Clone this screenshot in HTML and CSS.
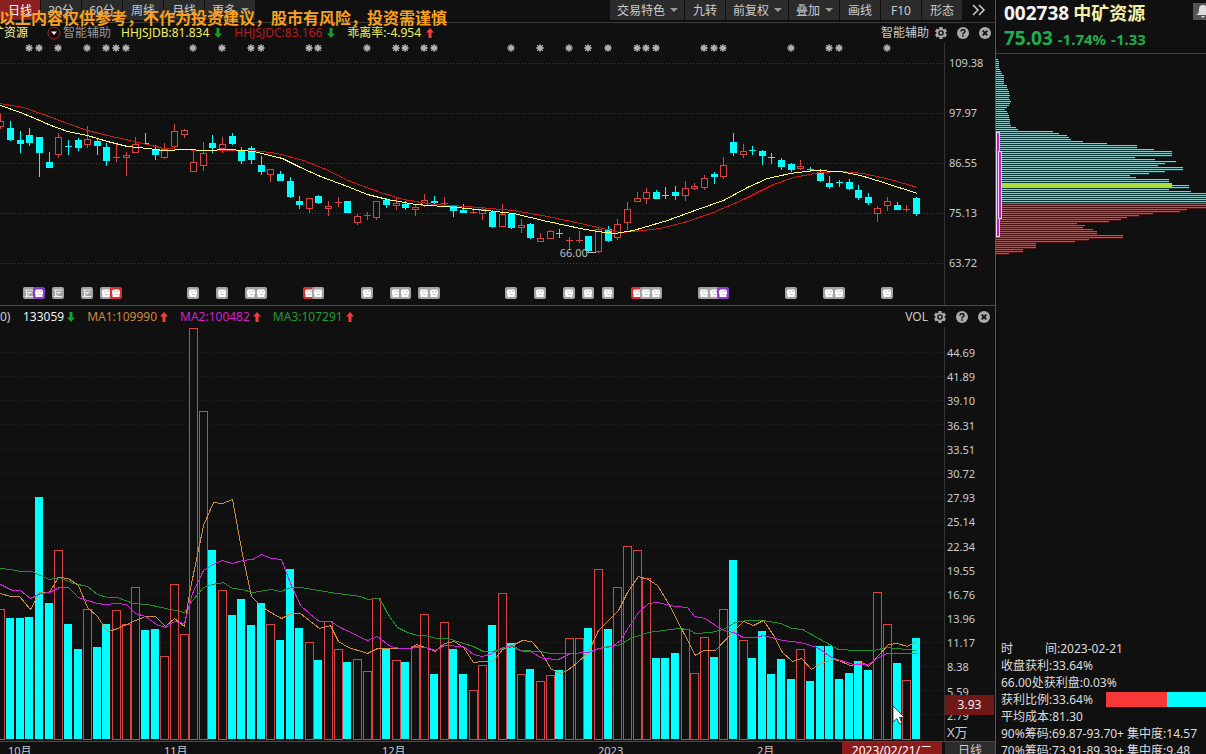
FILE: index.html
```html
<!DOCTYPE html>
<html lang="zh-CN">
<head>
<meta charset="utf-8">
<title>002738 中矿资源</title>
<link rel="stylesheet" href="styles.css">
</head>
<body>
<svg class="defs" width="0" height="0" aria-hidden="true">
  <symbol id="gear" viewBox="0 0 12 12"><path d="M6 0V12M.8 3L11.200 9M11.200 3L.8 9" stroke="#a9a9a9" stroke-width="3.200"/><circle cx="6" cy="6" r="4.500" fill="#a9a9a9"/><circle cx="6" cy="6" r="2.800" fill="#111"/><circle cx="6" cy="6" r="1.400" fill="#a9a9a9"/></symbol>
  <symbol id="help" viewBox="0 0 12 12"><circle cx="6" cy="6" r="6" fill="#a9a9a9"/><path d="M4 4.600Q4 2.800 6 2.800T8 4.500Q8 5.400 6 6.600V7.400" fill="none" stroke="#111" stroke-width="1.500"/><path d="M5.200 8.300h1.600v1.500H5.200z" fill="#111"/></symbol>
  <symbol id="close" viewBox="0 0 12 12"><circle cx="6" cy="6" r="6" fill="#a9a9a9"/><path d="M3.700 3.700l4.600 4.600M8.300 3.700L3.700 8.300" stroke="#111" stroke-width="1.900"/></symbol>
  <symbol id="up" viewBox="0 0 8 10"><path d="M4 0l4 4.500H5.500V10h-3V4.500H0z" fill="#f83c3c"/></symbol>
  <symbol id="down" viewBox="0 0 8 10"><path d="M4 10L0 5.500h2.500V0h3v5.500H8z" fill="#14a02c"/></symbol>
</svg>
<main class="charts">
  <nav class="toolbar">
    <div class="tabs">
      <button class="tab active">日线</button><button class="tab">30分</button><button class="tab">60分</button><button class="tab">周线</button><button class="tab">月线</button><button class="tab drop">更多</button>
    </div>
    <div class="tabs">
      <button class="tab drop">交易特色</button><button class="tab">九转</button><button class="tab drop">前复权</button><button class="tab drop">叠加</button><button class="tab">画线</button><button class="tab">F10</button><button class="tab">形态</button>
      <button class="more" aria-label="更多工具"><svg width="14" height="12" viewBox="0 0 14 12"><path d="M1 1l5 5-5 5M7 1l5 5-5 5" fill="none" stroke="#ccc" stroke-width="1.500"/></svg></button>
    </div>
  </nav>
  <p class="notice">以上内容仅供参考，不作为投资建议，股市有风险，投资需谨慎</p>

  <section class="panel">
    <header class="head">
      <div class="legend">
        <span class="stock">中矿资源</span>
        <svg class="pick" width="14" height="14" viewBox="0 0 14 14"><circle cx="7" cy="7" r="6" fill="#160808" stroke="#a02828"/><path d="M4 5.500h6L7 9z" fill="#eee"/></svg>
        <span class="assist">智能辅助</span>
        <span class="yellow">HHJSJDB:81.834</span><svg class="arrow"><use href="#down"/></svg>
        <span class="red">HHJSJDC:83.166</span><svg class="arrow"><use href="#down"/></svg>
        <span class="yellow">乖离率:-4.954</span><svg class="arrow"><use href="#up"/></svg>
      </div>
      <div class="tools"><span>智能辅助</span>
        <button aria-label="设置"><svg><use href="#gear"/></svg></button><button aria-label="帮助"><svg><use href="#help"/></svg></button><button aria-label="关闭"><svg><use href="#close"/></svg></button>
      </div>
    </header>
    <div class="body">
      <div class="plot">
        <svg id="price" viewBox="0 43 944 262" preserveAspectRatio="none"></svg>
        <span class="low">66.00</span>
      </div>
      <div class="axis price-axis"><span>109.38</span><span>97.97</span><span>86.55</span><span>75.13</span><span>63.72</span></div>
    </div>
  </section>

  <section class="panel volume">
    <header class="head">
      <div class="legend">
        <span class="params">0)</span>
        <span class="vol">133059</span><svg class="arrow"><use href="#down"/></svg>
        <span class="orange">MA1:109990</span><svg class="arrow"><use href="#up"/></svg>
        <span class="magenta">MA2:100482</span><svg class="arrow"><use href="#up"/></svg>
        <span class="green">MA3:107291</span><svg class="arrow"><use href="#up"/></svg>
      </div>
      <div class="tools"><span>VOL</span>
        <button aria-label="设置"><svg><use href="#gear"/></svg></button><button aria-label="帮助"><svg><use href="#help"/></svg></button><button aria-label="关闭"><svg><use href="#close"/></svg></button>
      </div>
    </header>
    <div class="body">
      <div class="plot"><svg id="volume" viewBox="0 327 944 414" preserveAspectRatio="none"></svg></div>
      <div class="axis volume-axis">
        <div class="scale"><span>44.69</span><span>41.89</span><span>39.10</span><span>36.31</span><span>33.51</span><span>30.72</span><span>27.93</span><span>25.14</span><span>22.34</span><span>19.55</span><span>16.76</span><span>13.96</span><span>11.17</span><span>8.38</span><span>5.59</span><span>2.79</span></div>
        <span class="unit">X万</span>
        <span class="marker">3.93</span>
      </div>
    </div>
  </section>

  <footer class="timeline">
    <div class="dates"><span>10月</span><span>11月</span><span>12月</span><span>2023</span><span>2月</span><span class="today">2023/02/21/二</span></div>
    <span class="period">日线</span>
  </footer>
</main>

<aside class="side">
  <header class="quote">
    <button class="bell" aria-label="提醒"><svg width="20" height="17" viewBox="0 0 20 17"><path d="M10 2c-3 0-4 2-4 5 0 3-1 4-3 5h14c-2-1-3-2-3-5 0-3-1-5-4-5zM8 13h4l-2 2z" fill="#ddd"/></svg></button>
    <h1><span class="code">002738</span> <span class="name">中矿资源</span></h1>
    <p class="last"><strong>75.03</strong> <span>-1.74%</span> <span>-1.33</span></p>
  </header>
  <svg id="chips" width="211" height="204" viewBox="995 54 211 204"></svg>
  <div class="info">
    <p><span class="wide">时</span>间:2023-02-21</p>
    <p>收盘获利:33.64%</p>
    <p>66.00处获利盘:0.03%</p>
    <p class="ratio"><span>获利比例:33.64%</span><span class="bar"><i></i></span></p>
    <p>平均成本:81.30</p>
    <p>90%筹码:69.87-93.70+ 集中度:14.57</p>
    <p>70%筹码:73.91-89.39+ 集中度:9.48</p>
  </div>
</aside>
<script src="charts.js"></script>
</body>
</html>
```

FILE: styles.css
```css
* { box-sizing: border-box; }
body {
  margin: 0;
  height: 100vh;
  display: flex;
  overflow: hidden;
  background: #101010;
  color: #ccc;
  font: 12px/16px "Noto Sans", "Noto Sans CJK SC", sans-serif;
}
p, h1 { margin: 0; }
button {
  margin: 0;
  padding: 0;
  border: 0;
  background: none;
  color: inherit;
  font: inherit;
}
svg { display: block; }
.defs { position: absolute; }

.charts {
  position: relative;
  flex: 1;
  min-width: 0;
  display: grid;
  grid-template-rows: 23px minmax(0, 283fr) minmax(0, 436fr) 12px;
}
.toolbar {
  display: flex;
  justify-content: space-between;
  border-bottom: 1px solid #3a3a3a;
  white-space: nowrap;
}
.tabs { display: flex; height: 20px; gap: 1px; }
.tab { background: #2b2b2b; line-height: 19px; }
.tab:not(.drop) { width: 40px; }
.tab.active { background: #8c2020; color: #fff; }
.drop { display: flex; align-items: center; gap: 5px; padding: 0 6px 0 7px; }
.drop::after { content: ""; border: 4px solid transparent; border-top-color: #999; border-bottom: 0; }
.more { width: 32px; padding-left: 9px; }
.notice {
  position: absolute;
  left: -1px;
  top: 6px;
  z-index: 1;
  color: #f9a11b;
  font-size: 16px;
  line-height: 24px;
  font-weight: bold;
  white-space: nowrap;
}

.panel { display: flex; flex-direction: column; border-bottom: 1px solid #4a4a4a; min-height: 0; }
.head { flex: none; height: 20px; display: flex; justify-content: space-between; align-items: center; overflow: hidden; }
.volume .head { height: 21px; }
.legend { display: flex; align-items: center; white-space: nowrap; }
.stock { margin-left: -20px; color: #f4f4b0; }
.pick { margin: 0 2px 0 19px; }
.assist { margin-right: 10px; color: #999; }
.arrow { width: 8px; height: 10px; margin: 0 12px 0 5px; }
.volume .arrow { margin-left: 3px; }
.yellow { color: #f0f060; }
.red { color: #b81c1c; }
.orange { color: #d0883a; }
.magenta { color: #d020d0; }
.green { color: #229a36; }
.params { width: 23px; }
.vol { color: #eee; }
.tools { display: flex; align-items: center; gap: 10px; padding-right: 4px; }
.volume .tools { padding-right: 5px; }
.tools span { margin-right: -4px; }
.tools svg { width: 12px; height: 12px; }
.body { flex: 1; display: flex; min-height: 0; }
.plot { position: relative; flex: 1; min-width: 0; }
.plot svg { width: 100%; height: 100%; }
.low { position: absolute; left: 59.300%; top: 77.500%; font-size: 11px; line-height: 14px; color: #bbb; }
.axis { position: relative; width: 51px; border-left: 1px solid #333; display: flex; flex-direction: column; font-size: 11px; }
.price-axis { justify-content: space-between; padding: 12px 0 34px 4px; }
.volume-axis { padding: 19px 0 0 2px; }
.scale { flex: 1; min-height: 0; display: flex; flex-direction: column; justify-content: space-between; line-height: 14px; }
.unit { font-size: 13px; line-height: 18px; }
.marker {
  position: absolute;
  left: 0;
  right: 1px;
  bottom: 26px;
  height: 20px;
  background: #701818;
  color: #eee;
  font-size: 12px;
  line-height: 20px;
  text-align: center;
}

.timeline { display: flex; overflow: hidden; line-height: 18px; font-size: 11px; }
.dates {
  flex: 1;
  height: 18px;
  display: grid;
  grid-template-columns: 156fr 218fr 216fr 159fr 85fr 100px;
  padding: 0 3px 0 8px;
}
.today { background: #8c1c1c; color: #fff; font-size: 12px; text-align: center; white-space: nowrap; }
.period { width: 50px; height: 18px; background: #2c2c2c; font-size: 12px; text-align: center; }

.side { width: 211px; display: flex; flex-direction: column; border-left: 1px solid #555; }
.quote { position: relative; height: 54px; padding: 2px 0 0 8px; border-bottom: 1px solid #444; white-space: nowrap; }
.bell { position: absolute; right: -7px; top: 3px; width: 20px; height: 17px; background: #555; }
h1 { font-size: 19px; line-height: 22px; color: #f4f4f4; }
.quote h1 { display: flex; gap: 4px; }
.name { font-size: 18px; color: #f6efa6; }
.last { display: flex; align-items: baseline; gap: 5px; color: #22ac4c; font-size: 15px; line-height: 28px; font-weight: bold; }
.last strong { font-size: 19px; font-weight: bold; }
#chips { flex: none; margin-left: -1px; }
.info { margin-top: auto; margin-bottom: -5px; padding-left: 5px; line-height: 17px; white-space: nowrap; overflow: hidden; color: #ddd; }
.wide { display: inline-block; width: 44px; }
.ratio { display: flex; justify-content: space-between; align-items: center; }
.bar { width: 100px; height: 15px; background: #00ffff; }
.bar i { display: block; width: 61px; height: 15px; background: #f83838; }
```

FILE: charts.js
```js
const CYAN = '#00ffff', RED = '#d84444', BG = '#101010';
const column = i => Math.round(0.4 + 9.638 * i);
const rect = (x, y, w, h, fill, extra = '') =>
  `<rect x="${x}" y="${y}" width="${w}" height="${h}" fill="${fill}" ${extra}/>`;
const box = (x, y, w, h, color) =>
  rect(x, y, w, h, color) + (h > 2 ? rect(x + 1, y + 1, w - 2, h - 2, BG) : '');
const line = (points, color) =>
  `<polyline points="${points}" fill="none" stroke="${color}" stroke-width="1" transform="translate(.5 .5)"/>`;
const gridline = (y, color) =>
  `<path d="M0 ${y}.5H944" stroke="${color}" stroke-dasharray="1 2"/>`;

// Each candle: direction (r rise, c fall), high, body top, body bottom, low
const candles = `r114,121,127,129 c121,128,140,141 c131,140,144,153 c128,135,143,146 c137,137,153,177 c152,162,168,168
r133,137,155,158 c140,146,146,155 c138,140,148,151 r126,139,145,148 c139,141,146,155 c143,147,161,166 r143,157,157,162
r152,155,158,176 r137,144,153,153 c133,143,143,144 c145,149,155,160 r143,149,158,159 r124,131,147,149 r129,130,135,138
r151,162,172,172 r142,153,166,171 c135,143,148,153 r137,144,149,153 c133,136,144,145 c147,151,161,164 c146,148,160,164
c156,165,172,175 r169,169,175,182 c171,174,181,181 c177,181,197,198 c196,201,205,209 r198,198,209,213 c195,196,203,204
r201,206,209,216 r197,202,202,207 c201,201,213,213 r214,216,223,225 r212,215,215,220 r201,201,218,220 c198,200,205,208
r197,203,206,210 c201,204,208,210 r205,207,210,216 r194,200,206,207 c196,201,203,206 r197,203,203,207 c206,206,211,217
c204,210,213,213 r208,212,212,214 r208,209,214,220 c210,212,227,228 r204,214,227,227 c213,214,228,229 r219,225,228,233
c223,224,238,239 r233,238,242,242 r230,231,239,239 c229,233,233,238 r237,240,240,250 r231,240,240,243 c236,236,251,253
r228,229,252,253 c226,229,241,242 r219,224,238,240 r202,209,223,230 r192,198,202,202 r188,192,199,204 c190,192,199,199
c187,195,195,199 c186,192,196,200 r181,188,196,201 r183,186,189,190 r175,178,188,190 c172,174,177,184 r157,165,177,179
c133,142,153,156 r144,151,155,158 c146,150,150,155 c150,151,156,165 c153,157,157,164 c158,160,167,170 c163,164,170,172
r160,166,169,170 c167,169,169,172 c169,172,181,182 c176,183,187,189 c180,182,182,187 c179,182,189,190 c185,190,198,200
c193,197,203,205 r206,208,214,222 r197,201,206,211 c202,205,210,210 r205,209,209,212 c197,198,214,216`.split(/\s+/);

let out = [63, 113, 163, 213, 263].map(y => gridline(y, '#3c3c3c')).join('');
candles.forEach((item, i) => {
  const [high, top, bottom, low] = item.slice(1).split(',').map(Number);
  const x = column(i), rise = item[0] === 'r', color = rise ? RED : CYAN;
  out += rect(x, high, 1, low - high, color);
  if (top === bottom) out += rect(x - 3, top, 7, 1, color);
  else out += rise ? box(x - 3, top, 7, bottom - top, color) : rect(x - 3, top, 7, bottom - top, color);
});
out += line('0,103 23,107 43,114 67,123 87,130 107,135 147,144 163,148 200,150 253,150 277,153 303,160 323,168 350,181 380,192 403,199 433,204 467,206 513,210 547,216 580,223 607,229 620,232 633,231 660,228 687,221 713,212 743,199 773,184 793,177 820,172 840,171 863,173 890,179 917,187', '#d01818');
out += line('0,105 20,112 37,119 48,124 67,131 87,135 107,141 127,146 147,148 163,150 187,149 203,150 230,149 253,151 282,158 300,167 320,176 347,186 367,194 387,199 415,204 443,206 467,208 513,213 547,221 580,228 597,231 615,233 633,230 667,220 700,208 723,200 747,187 767,178 790,173 813,170 840,171 860,175 883,182 917,193', '#ffff70');
out += '<path d="M587 252.500h9" stroke="#bbb"/>';
out = `<g shape-rendering="crispEdges">${out}</g>`;

const stars = [3, 4, 6, 9, 11, 12, 13, 20, 23, 26, 27, 32, 33, 38, 41, 42, 44, 45, 53, 56, 59, 61, 63, 66, 67, 68, 73, 74, 75, 82, 86, 87, 92];
const tints = { 4: '#8c3cc8', 12: '#d83030', 32: '#d83030', 66: '#d83030', 75: '#8c3cc8' };
stars.forEach(i => {
  const x = column(i);
  out += `<g transform="translate(${x} 48)"><circle r="2.800" fill="#c4c4c4"/><path d="M0-4V4M-4 0H4M-3-3L3 3M-3 3L3-3" stroke="#aaa"/></g>`;
  if (i === 13) return;
  const note = i === 3 || i === 6 || i === 9;
  out += `<g transform="translate(${x - 6} 287)"><rect width="12" height="12" rx="2" fill="${tints[i] || '#a4a4a4'}"/>` +
    (note
      ? '<path d="M2 3h8M3 5.500h6M2 9.500h8M3.500 3v6M7 6l-3 3" stroke="#eee" fill="none"/>'
      : '<path d="M2 4.500l1-2h6l1 2v2.500H9.500V10h-7V7H2z" fill="#fff"/><path d="M4 4.800h2M7 4.500h2M5 7.500h3" stroke="#aaa" stroke-width=".7"/>') + '</g>';
});
document.getElementById('price').innerHTML = out;

// Volume columns: direction and top edge
const volumes = `r609 c618 c618 c617 c497 c603 r550 c624 c649 r609 c647 c624 r610 r624 r587 c630 c629 r656 r584 r634
r328 r411 c550 r590 c615 c599 c625 c603 r624 c640 c569 c628 r642 c660 r621 r649 c662 r659 r671 r598 c649 r660 c662 r646 r614
c674 r622 c649 c674 r690 r665 c625 r593 c643 r674 c669 r681 r675 c670 r638 r638 c628 r569 c629 r587 r546 r550 r578 c658 c658
c653 r629 r673 r637 c657 r609 c560 r640 c658 c631 c674 c659 c679 r649 c681 c646 c646 c679 c673 c661 c670 r592 r624 c663 r680 c638`.split(/\s+/);
let vol = '';
for (let k = 0; k < 16; k++) vol += gridline(Math.round(352 + k * 24.13), '#262626');
volumes.forEach((item, i) => {
  const y = Number(item.slice(1)), x = column(i);
  vol += item[0] === 'r' ? box(x - 4, y, 9, 740 - y, RED) : rect(x - 4, y, 8, 739 - y, CYAN);
});
vol += line('0,568 10,569 20,571 31,571 40,575 49,579 59,577 73,583 87,586 97,594 107,597 117,597 133,603 147,604 184,612 192,600 203,587 212,584 223,582 232,588 242,589 252,592 271,589 280,591 291,587 300,587 319,590 330,592 360,596 368,599 378,598 382,603 387,613 397,627 407,632 417,635 425,635 436,638 448,638 463,643 473,646 483,651 492,651 512,646 520,650 540,651 550,653 570,653 588,652 602,647 618,645 630,638 648,632 678,628 688,629 695,633 710,632 723,629 735,622 747,620 763,620 780,623 792,628 802,629 820,639 838,649 857,650 873,650 887,647 916,650', '#1f8f2f');
vol += line('0,593 10,596 19,596 30,609 39,592 49,592 58,577 68,578 78,585 87,607 97,616 107,631 115,629 135,620 145,616 155,616 165,626 174,618 184,626 189,593 203,525 213,502 222,503 232,499 242,554 251,596 261,606 272,613 281,618 291,613 300,613 319,628 330,625 338,641 348,647 367,653 377,648 410,648 416,644 425,647 435,651 444,643 454,641 463,647 473,662 482,661 493,661 502,649 512,645 522,640 531,641 540,651 551,669 560,673 567,670 577,662 588,652 598,630 618,610 627,592 638,576 648,579 657,585 668,603 682,630 695,655 703,650 715,650 733,631 743,621 753,625 763,620 772,633 782,652 792,661 801,658 811,669 820,663 833,659 838,660 850,665 862,662 868,666 878,655 888,644 897,643 907,646 916,641', '#d08c40');
vol += line('0,584 12,590 20,590 30,598 40,593 49,592 59,587 68,587 78,597 87,600 97,603 105,604 117,603 126,604 135,613 145,616 156,624 165,627 174,621 184,623 192,593 203,570 212,564 222,560 232,563 242,560 252,559 261,554 271,558 281,559 290,583 300,605 310,614 319,621 330,621 340,627 367,640 377,636 390,646 400,648 425,647 435,650 444,645 463,646 473,654 482,656 492,653 502,647 512,645 522,651 530,651 542,658 558,659 570,653 588,652 598,648 612,646 620,640 628,627 638,612 648,603 657,602 675,606 687,607 694,616 705,618 715,625 723,630 733,632 743,637 755,637 763,635 782,640 800,642 817,647 831,657 853,664 868,664 878,657 887,653 897,653 916,653', '#d020d8');
vol = `<g shape-rendering="crispEdges">${vol}</g>`;
vol += '<path d="M893 706v16l4-3.500 2.500 5.500 2.500-1-2.500-5.500h5z" fill="#fff" stroke="#111" stroke-width=".7"/>';
document.getElementById('volume').innerHTML = vol;

// Chip distribution: row lengths from the highest price level down
const above = [2, 3, 3, 3, 3, 4, 5, 6, 8, 8, 8, 8, 8, 11, 11, 12, 13, 13, 14, 13, 14, 15, 14, 13, 11, 9, 11, 12, 13, 13, 14, 14, 14, 15, 20, 22, 57, 63, 71, 73, 75, 87, 111, 141, 141, 158, 176, 176, 176, 139, 159, 180, 169, 162, 187, 187, 169, 153, 134, 140, 173, 173, 176, 193, 193, 173, 195, 210, 210, 210, 210, 210];
const below = [210, 210, 210, 191, 184, 157, 143, 131, 125, 113, 81, 89, 87, 97, 101, 101, 127, 127, 93, 79, 40, 40, 40, 27, 27, 13];
let chips = '';
above.forEach((w, k) => { chips += rect(996, 59 + k * 2, w, 2, '#063838') + rect(996, 59 + k * 2, w, 1, '#70d4d4'); });
below.forEach((w, k) => { chips += rect(996, 203 + k * 2, w, 2, '#4c1010') + rect(996, 203 + k * 2, w, 1, '#d84848'); });
chips += rect(1002, 183, 170, 5, '#acdc3c');
chips += rect(996, 132, 4, 105, '#f4d4f4') + rect(997, 133, 2, 103, '#c020c0');
chips += rect(998, 151, 4, 68, '#f4d4f4') + rect(999, 152, 2, 66, '#c020c0');
document.getElementById('chips').innerHTML = `<g shape-rendering="crispEdges">${chips}</g>`;
```
